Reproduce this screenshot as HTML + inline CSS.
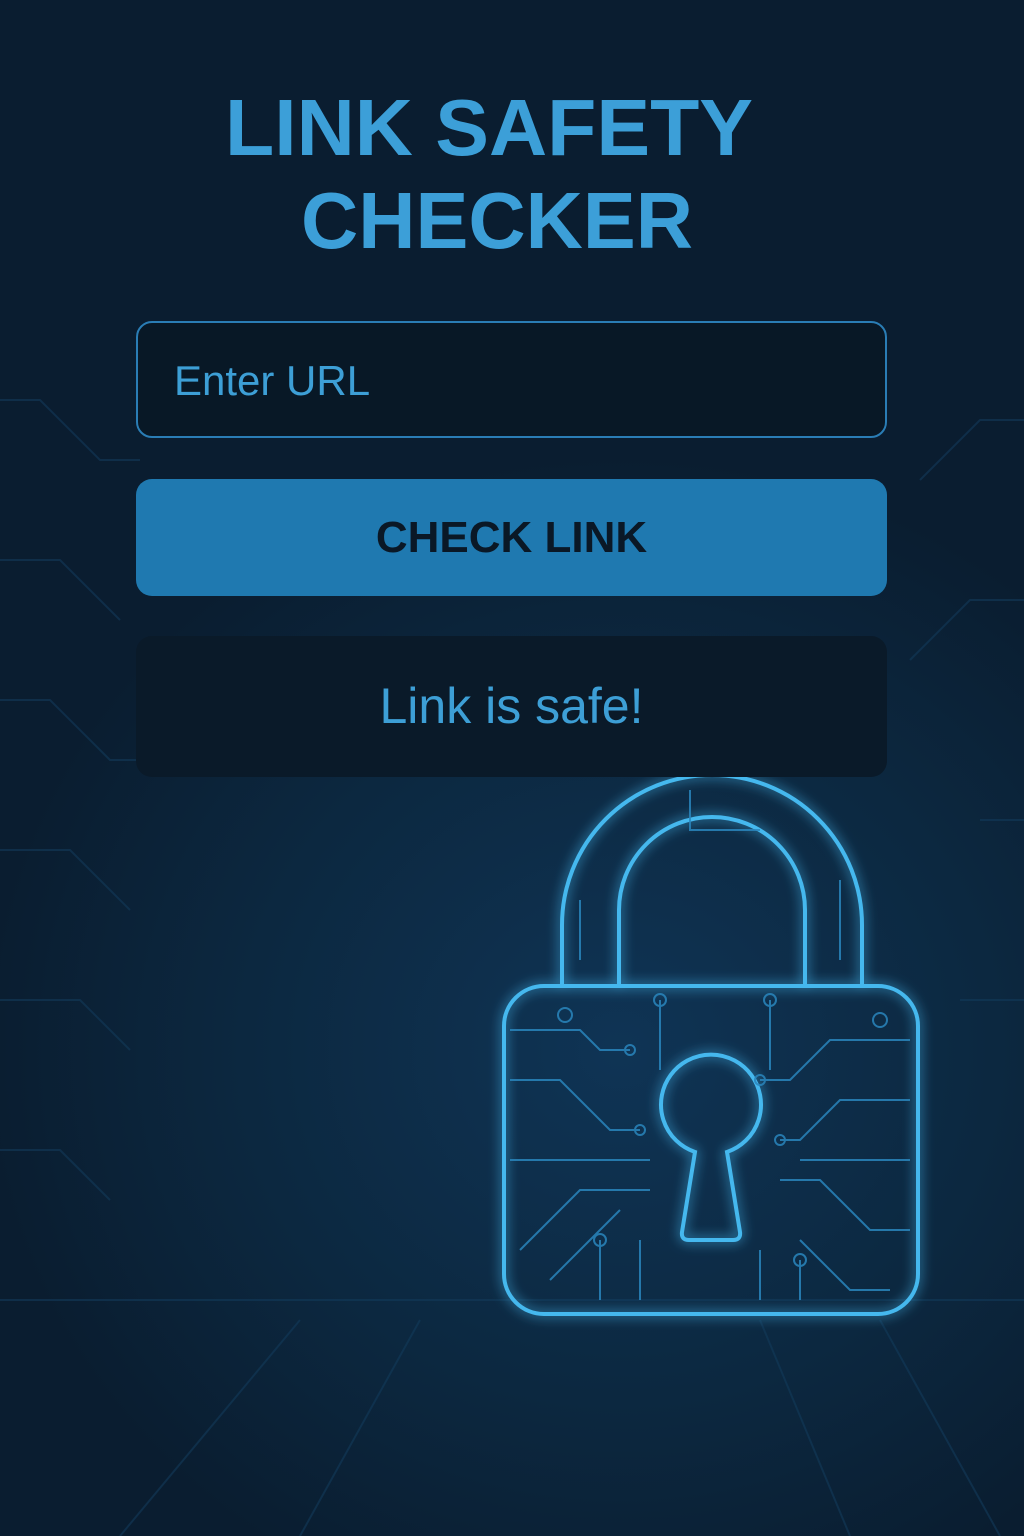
<!DOCTYPE html>
<html><head><meta charset="utf-8"><style>
html,body{margin:0;padding:0}
body{width:1024px;height:1536px;overflow:hidden;position:relative;font-family:"Liberation Sans",sans-serif;
background:radial-gradient(ellipse 750px 700px at 620px 1050px,#0f3455 0%,#0c2840 50%,#0a1d30 85%),#0a1a2a;}
.box{position:absolute;left:136px;width:751px;border-radius:16px;box-sizing:border-box}
#inp{top:321px;height:117px;border:2px solid #2a7db5;background:#081826}
#inp span{position:absolute;left:36px;top:34px;font-size:42px;color:#3d9fd6}
#btn{top:479px;height:117px;background:#1f79b0;text-align:center;line-height:117px;font-size:44px;font-weight:bold;color:#0a1826}
#res{top:636px;height:141px;background:#0a1a29;text-align:center;line-height:141px;font-size:50px;color:#3d9fd6}
</style></head><body>
<svg width="1024" height="1536" style="position:absolute;left:0;top:0">
<defs><filter id="g" x="-20%" y="-20%" width="140%" height="140%"><feGaussianBlur stdDeviation="6" result="b"/><feMerge><feMergeNode in="b"/><feMergeNode in="SourceGraphic"/></feMerge></filter></defs>
<g stroke="#123a5a" stroke-width="2" fill="none" opacity="0.6">
<path d="M0 400 L40 400 L100 460 L140 460 M0 560 L60 560 L120 620 M0 700 L50 700 L110 760 L150 760 M0 850 L70 850 L130 910 M0 1000 L80 1000 L130 1050 M0 1150 L60 1150 L110 1200 M1024 420 L980 420 L920 480 M1024 600 L970 600 L910 660 M1024 820 L980 820 M1024 1000 L960 1000 M0 1300 L1024 1300 M120 1536 L300 1320 M300 1536 L420 1320 M850 1536 L760 1320 M1000 1536 L880 1320"/>
</g>
<g fill="none" stroke="#45b8ee" stroke-width="4" filter="url(#g)">
<path d="M562 986 L562 925 A150 150 0 0 1 862 925 L862 986"/>
<path d="M619 986 L619 910 A93 93 0 0 1 805 910 L805 986"/>
<rect x="504" y="986" width="414" height="328" rx="40"/>
<path d="M695 1152 A50 50 0 1 1 727 1152 L740 1232 Q741 1240 733 1240 L689 1240 Q681 1240 682 1232 Z"/>
</g>
<g fill="none" stroke="#2a86bd" stroke-width="2" opacity="0.85">
<path d="M510 1030 L580 1030 L600 1050 L630 1050 M510 1080 L560 1080 L610 1130 L640 1130 M510 1160 L650 1160 M520 1250 L580 1190 L650 1190 M550 1280 L620 1210 M600 1300 L600 1240 M640 1300 L640 1240 M910 1040 L830 1040 L790 1080 L760 1080 M910 1100 L840 1100 L800 1140 L780 1140 M910 1160 L800 1160 M910 1230 L870 1230 L820 1180 L780 1180 M890 1290 L850 1290 L800 1240 M760 1300 L760 1250 M800 1300 L800 1260 M660 1000 L660 1070 M770 1000 L770 1070 M580 900 L580 960 M840 880 L840 960 M690 790 L690 830 L760 830"/>
<circle cx="630" cy="1050" r="5"/><circle cx="640" cy="1130" r="5"/><circle cx="760" cy="1080" r="5"/><circle cx="780" cy="1140" r="5"/><circle cx="600" cy="1240" r="6"/><circle cx="800" cy="1260" r="6"/><circle cx="660" cy="1000" r="6"/><circle cx="770" cy="1000" r="6"/><circle cx="880" cy="1020" r="7"/><circle cx="565" cy="1015" r="7"/>
</g>
<text x="489" y="155" text-anchor="middle" font-family="Liberation Sans" font-weight="bold" font-size="80" fill="#3c9fd8" textLength="528" lengthAdjust="spacingAndGlyphs">LINK SAFETY</text>
<text x="497" y="248" text-anchor="middle" font-family="Liberation Sans" font-weight="bold" font-size="80" fill="#3c9fd8" textLength="392" lengthAdjust="spacingAndGlyphs">CHECKER</text>
</svg>
<div class="box" id="inp"><span>Enter URL</span></div>
<div class="box" id="btn">CHECK LINK</div>
<div class="box" id="res">Link is safe!</div>
</body></html>
